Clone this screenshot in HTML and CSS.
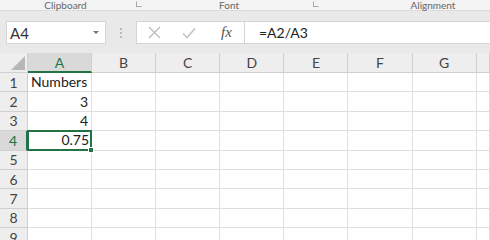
FILE: index.html
```html
<!doctype html>
<html lang="en">
<head>
	<meta charset="UTF-8">
	<title>Book1 - Excel</title>
	<link rel="stylesheet" href="styles.css">
</head>
<body>
	<div class="ribbon">
		<div class="group g1"><span class="label">Clipboard</span><span class="launcher"></span></div>
		<div class="group g2"><span class="label">Font</span><span class="launcher"></span></div>
		<div class="group g3"><span class="label">Alignment</span></div>
	</div>
	<div class="fbar">
		<div class="namebox">
			<span>A4</span>
			<svg width="6" height="4" viewBox="0 0 6 4"><path d="M0 0h6L3 3z" fill="#777"/></svg>
		</div>
		<div class="grip"><i></i><i></i><i></i></div>
		<div class="formula">
			<div class="tools">
				<svg width="13" height="13" viewBox="0 0 13 13"><path d="M1 1l11 11M12 1L1 12" stroke="#b9b9b9" stroke-width="1.2" fill="none"/></svg>
				<svg width="14" height="12" viewBox="0 0 14 12"><path d="M1 6.5l4 4L13 1.5" stroke="#c4c4c4" stroke-width="1.6" fill="none"/></svg>
				<span class="fx">fx</span>
			</div>
			<div class="input">=A2/A3</div>
		</div>
	</div>
	<div class="sheet">
		<div class="corner"></div>
		<div class="ch sel">A</div>
		<div class="ch">B</div>
		<div class="ch">C</div>
		<div class="ch">D</div>
		<div class="ch">E</div>
		<div class="ch">F</div>
		<div class="ch">G</div>
		<div class="ch"></div>

		<div class="rh">1</div><div class="c">Numbers</div><div class="c"></div><div class="c"></div><div class="c"></div><div class="c"></div><div class="c"></div><div class="c"></div><div class="c"></div>
		<div class="rh">2</div><div class="c num">3</div><div class="c"></div><div class="c"></div><div class="c"></div><div class="c"></div><div class="c"></div><div class="c"></div><div class="c"></div>
		<div class="rh">3</div><div class="c num">4</div><div class="c"></div><div class="c"></div><div class="c"></div><div class="c"></div><div class="c"></div><div class="c"></div><div class="c"></div>
		<div class="rh sel">4</div><div class="c num active">0.75<span class="handle"></span></div><div class="c"></div><div class="c"></div><div class="c"></div><div class="c"></div><div class="c"></div><div class="c"></div><div class="c"></div>
		<div class="rh">5</div><div class="c"></div><div class="c"></div><div class="c"></div><div class="c"></div><div class="c"></div><div class="c"></div><div class="c"></div><div class="c"></div>
		<div class="rh">6</div><div class="c"></div><div class="c"></div><div class="c"></div><div class="c"></div><div class="c"></div><div class="c"></div><div class="c"></div><div class="c"></div>
		<div class="rh">7</div><div class="c"></div><div class="c"></div><div class="c"></div><div class="c"></div><div class="c"></div><div class="c"></div><div class="c"></div><div class="c"></div>
		<div class="rh">8</div><div class="c"></div><div class="c"></div><div class="c"></div><div class="c"></div><div class="c"></div><div class="c"></div><div class="c"></div><div class="c"></div>
		<div class="rh">9</div><div class="c"></div><div class="c"></div><div class="c"></div><div class="c"></div><div class="c"></div><div class="c"></div><div class="c"></div><div class="c"></div>
	</div>
</body>
</html>
```

FILE: styles.css
```css
*{margin:0;padding:0;box-sizing:border-box;}
html,body{width:490px;height:240px;overflow:hidden;background:#fff;}
body{font-family:Lato,"Open Sans",sans-serif;color:#222;}

.ribbon{
	height:11px;
	display:flex;
	background:#f3f3f3;
	border-bottom:1px solid #dcdcdc;
}
.ribbon .group{
	position:relative;
	display:flex;
	justify-content:center;
}
.ribbon .label{
	font-size:10px;
	line-height:10px;
	color:#666;
}
.ribbon .launcher{
	position:absolute;
	right:3px;
	top:1px;
	width:6px;
	height:6px;
	border:1px solid #a8a8a8;
	border-top-color:transparent;
	border-right-color:transparent;
}
.g1{width:145px;padding-right:14px;}
.g2{width:177px;padding-right:9px;}
.g3{flex:1;padding-left:54px;}

.fbar{
	height:42px;
	background:#e9e9e9;
	display:flex;
	align-items:flex-start;
	padding:10px 0 0 6px;
}
.namebox{
	width:100px;
	height:23px;
	background:#fff;
	border:1px solid #d5d5d5;
	display:flex;
	align-items:center;
	justify-content:space-between;
	padding:0 6px 0 3px;
	font-size:15px;
	color:#333;
}
.grip{
	width:30px;
	height:23px;
	display:flex;
	flex-direction:column;
	align-items:center;
	justify-content:center;
	gap:2px;
}
.grip i{width:2px;height:2px;background:#bbb;}
.formula{
	flex:1;
	height:23px;
	display:flex;
	background:#fff;
	border:1px solid #d5d5d5;
	border-right:none;
}
.tools{
	width:108px;
	display:flex;
	align-items:center;
	padding-left:11px;
	gap:21px;
	border-right:1px solid #d5d5d5;
}
.fx{
	font-family:"Liberation Serif",serif;
	font-style:italic;
	font-size:15px;
	color:#555;
	margin-left:4px;
}
.input{
	padding-left:14px;
	font-size:14px;
	line-height:21px;
	color:#222;
}

.sheet{
	display:grid;
	grid-template-columns:28px repeat(7,64.1px) 1fr;
	grid-template-rows:20px;
	grid-auto-rows:19.4px;
	font-size:14px;
}
.corner,.ch,.rh{
	background:#eeeeee;
	color:#444;
	border-right:1px solid #cfcfcf;
	border-bottom:1px solid #cfcfcf;
	display:flex;
	align-items:center;
	justify-content:center;
	font-size:14px;
}
.corner{position:relative;}
.corner::after{
	content:"";
	position:absolute;
	right:2px;
	bottom:2px;
	border-left:14px solid transparent;
	border-bottom:14px solid #b7b7b7;
}
.ch.sel{
	background:#d9d9d9;
	color:#217346;
	border-bottom:2px solid #217346;
}
.rh.sel{
	background:#d9d9d9;
	color:#217346;
	border-right:2px solid #217346;
}
.c{
	border-right:1px solid #dedede;
	border-bottom:1px solid #dedede;
	display:flex;
	align-items:center;
	padding:0 3px;
	white-space:nowrap;
	line-height:1;
}
.c.num{justify-content:flex-end;}
.c.active{
	position:relative;
	border:2px solid #217346;
	margin:-1px 0 0 -1px;
	padding-right:1px;
}
.handle{
	position:absolute;
	right:-4px;
	bottom:-4px;
	width:6px;
	height:6px;
	background:#217346;
	border:1px solid #fff;
}
```
